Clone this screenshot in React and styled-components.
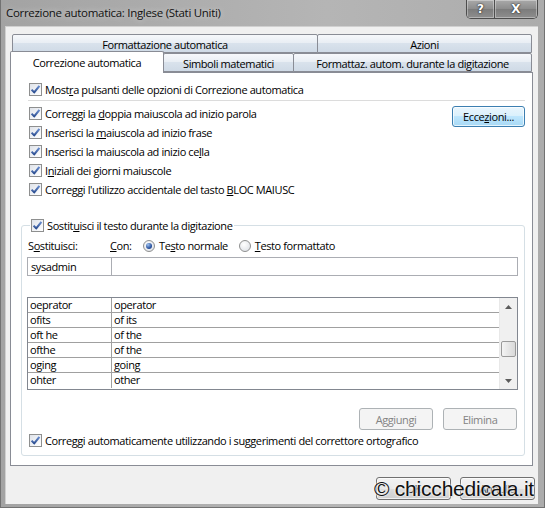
import React from 'react';
import styled, { createGlobalStyle } from 'styled-components';

const GlobalStyle = createGlobalStyle`
    html, body {
        margin: 0;
        padding: 0;
        background: #ffffff;
    }
    body {
        font-family: "Open Sans", "Noto Sans", sans-serif;
        font-size: 11px;
        letter-spacing: -0.4px;
        color: #000;
    }
`

const Window = styled.div`
    position: relative;
    width: 545px;
    height: 508px;
    box-sizing: border-box;
    display: flex;
    flex-direction: column;
    padding: 0 6px 3px 4px;
    background: linear-gradient(90deg, #a3a3a3, #b5b5b5 60%, #acacac);
    border-left: 1px solid #727272;
    border-right: 1px solid #727272;
    border-bottom: 1px solid #727272;
`

const TitleBar = styled.div`
    height: 26px;
    display: flex;
    justify-content: space-between;
    align-items: flex-start;
`

const Title = styled.div`
    padding-top: 5px;
    padding-left: 1px;
    font-size: 11.5px;
    letter-spacing: -0.3px;
    color: #111;
    text-shadow: 0 0 6px rgba(255, 255, 255, 0.6);
`

const Captions = styled.div`
    display: flex;
    height: 18px;
    border: 1px solid #4d4d4d;
    border-top: none;
    border-radius: 0 0 5px 5px;
    overflow: hidden;
`

const CaptionButton = styled.div`
    width: ${p => p.$w}px;
    height: 18px;
    display: flex;
    justify-content: center;
    align-items: center;
    background: linear-gradient(#a9a9a9, #8c8c8c 50%, #7b7b7b 50%, #8e8e8e);
    box-shadow: inset 0 0 0 1px rgba(255, 255, 255, 0.35);
    color: #fff;
    font-family: "DejaVu Sans", sans-serif;
    font-weight: bold;
    font-size: 12px;
    letter-spacing: 0;
    text-shadow: 0 0 2px #222, 0 0 1px #222;
    & + & {
        border-left: 1px solid #4d4d4d;
    }
`

const Client = styled.div`
    flex: 1;
    display: flex;
    flex-direction: column;
    background: #f0f0f0;
    padding: 7px 5px 0 5px;
    box-shadow: inset 1px 1px 0 #d0d0d0;
`

const TabRow = styled.div`
    position: relative;
    display: flex;
    align-items: flex-end;
    height: ${p => p.$h}px;
    margin-left: ${p => p.$indent}px;
    margin-top: ${p => p.$gap}px;
`

const Tab = styled.div`
    position: relative;
    box-sizing: border-box;
    width: ${p => p.$w}px;
    height: ${p => (p.$active ? 22 : 19)}px;
    margin-bottom: ${p => (p.$active ? -1 : 0)}px;
    z-index: ${p => (p.$active ? 2 : 1)};
    display: flex;
    justify-content: center;
    align-items: center;
    padding-top: ${p => (p.$active ? 0 : 1)}px;
    border: 1px solid #898c95;
    border-bottom: ${p => (p.$active ? 'none' : '1px solid #898c95')};
    border-radius: 2px 2px 0 0;
    background: ${p => (p.$active
        ? '#ffffff'
        : 'linear-gradient(#f6f8fb, #e9eef4 45%, #d9e2ec 50%, #cfdae6)')};
    & + & {
        margin-left: -1px;
    }
`

const Panel = styled.div`
    position: relative;
    z-index: 1;
    height: 394px;
    box-sizing: border-box;
    background: #ffffff;
    border: 1px solid #898c95;
    padding: 7px 7px 0 10px;
    display: flex;
    flex-direction: column;
`

const TopSection = styled.div`
    padding-left: 7px;
`

const Separator = styled.div`
    height: 1px;
    background: #dcdcdc;
    margin: 1px 0 3px 0;
`

const OptionsArea = styled.div`
    display: flex;
    justify-content: space-between;
    align-items: flex-start;
`

const OptionList = styled.div`
    display: flex;
    flex-direction: column;
`

const CheckRow = styled.label`
    display: flex;
    align-items: center;
    height: 19px;
    white-space: nowrap;
`

const Box = styled.span`
    width: 13px;
    height: 13px;
    box-sizing: border-box;
    margin: 0 3px 0 1px;
    border: 1px solid #8e8f8f;
    background: linear-gradient(135deg, #dfe3ea, #ffffff);
    display: flex;
    align-items: center;
    justify-content: center;
    flex-shrink: 0;
    svg {
        display: block;
    }
`

const RadioDot = styled.span`
    width: 12px;
    height: 12px;
    box-sizing: border-box;
    border-radius: 50%;
    border: 1px solid #8e8f8f;
    background: radial-gradient(circle at 40% 35%, #ffffff, #d9dde3);
    display: flex;
    align-items: center;
    justify-content: center;
    margin-right: 4px;
    &::after {
        content: '';
        display: ${p => (p.$on ? 'block' : 'none')};
        width: 6px;
        height: 6px;
        border-radius: 50%;
        background: radial-gradient(circle at 35% 30%, #9fc3f0, #2c54a0 60%, #1b3a7a);
    }
`

const Button = styled.div`
    box-sizing: border-box;
    width: ${p => p.$w}px;
    height: ${p => p.$h || 22}px;
    margin-top: ${p => p.$top || 0}px;
    display: flex;
    justify-content: center;
    align-items: center;
    border-radius: 3px;
    border: 1px solid ${p => (p.$disabled ? '#adb2b5' : p.$focus ? '#3c7fb1' : '#707070')};
    color: ${p => (p.$disabled ? '#838383' : '#000')};
    background: ${p => (p.$disabled
        ? '#f4f4f4'
        : p.$focus
            ? 'linear-gradient(#eaf6fd, #d9f0fc 50%, #bee6fd 50%, #a7d9f5)'
            : 'linear-gradient(#f2f2f2, #ebebeb 50%, #dddddd 50%, #cfcfcf)')};
    box-shadow: ${p => (p.$disabled ? 'none' : 'inset 0 0 0 1px rgba(255, 255, 255, 0.7)')};
`

const GroupBox = styled.fieldset`
    margin: 17px 0 0 0;
    padding: 0 6px 5px 5px;
    border: 1px solid #d5dfe5;
    border-radius: 3px;
    display: flex;
    flex-direction: column;
    legend {
        padding: 0 2px 0 0;
        margin-left: 3px;
    }
`

const FieldHeader = styled.div`
    display: flex;
    align-items: center;
    height: 19px;
    margin-top: 1px;
    padding-left: 1px;
`

const Label = styled.span`
    width: ${p => p.$w}px;
`

const RadioItem = styled.label`
    display: flex;
    align-items: center;
    margin-right: ${p => p.$gap || 0}px;
`

const InputRow = styled.div`
    display: flex;
    height: 19px;
    margin-top: 2px;
`

const TextInput = styled.div`
    box-sizing: border-box;
    height: 19px;
    width: ${p => (p.$w ? `${p.$w}px` : 'auto')};
    flex: ${p => (p.$w ? 'none' : 1)};
    border: 1px solid #abadb3;
    border-left-width: ${p => (p.$join ? 0 : 1)}px;
    padding: 0 3px;
    display: flex;
    align-items: center;
`

const List = styled.div`
    display: flex;
    margin-top: 21px;
    height: 93px;
    box-sizing: border-box;
    border: 1px solid #828790;
`

const Rows = styled.div`
    flex: 1;
    display: flex;
    flex-direction: column;
`

const Row = styled.div`
    display: flex;
    height: 15px;
    box-sizing: border-box;
    border-bottom: ${p => (p.$last ? 'none' : '1px solid #a0a0a0')};
`

const Cell = styled.div`
    box-sizing: border-box;
    width: ${p => (p.$w ? `${p.$w}px` : 'auto')};
    flex: ${p => (p.$w ? 'none' : 1)};
    border-right: ${p => (p.$w ? '1px solid #a0a0a0' : 'none')};
    padding-left: 2px;
    line-height: 14px;
    white-space: nowrap;
`

const ScrollBar = styled.div`
    width: 17px;
    display: flex;
    flex-direction: column;
    background: #f0f0f0;
    border-left: 1px solid #e8e8e8;
`

const ScrollArrow = styled.div`
    height: 17px;
    display: flex;
    justify-content: center;
    align-items: center;
`

const ScrollTrack = styled.div`
    flex: 1;
    display: flex;
    flex-direction: column;
    padding-top: ${p => p.$offset}px;
    align-items: center;
`

const Thumb = styled.div`
    width: 15px;
    height: 16px;
    box-sizing: border-box;
    border: 1px solid #9a9a9a;
    border-radius: 2px;
    background: linear-gradient(90deg, #f4f4f4, #e6e6e6 50%, #d9d9d9);
`

const ActionRow = styled.div`
    display: flex;
    justify-content: flex-end;
    gap: 10px;
    margin-top: 18px;
    padding-right: 1px;
`

const BottomCheck = styled(CheckRow)`
    margin-top: 1px;
    padding-left: 1px;
`

const Footer = styled.div`
    display: flex;
    justify-content: flex-end;
    gap: 9px;
    margin-top: 11px;
    margin-right: -2px;
`

const Watermark = styled.div`
    position: absolute;
    right: 10px;
    bottom: 6px;
    font-family: "Liberation Sans", Arial, sans-serif;
    font-size: 21px;
    color: #111;
    letter-spacing: -0.2px;
    text-shadow: 0 0 2px #fff, 0 0 3px #fff, 1px 1px 2px #ccc;
`

// small drawings

const Check = ({ on = true }) => (
    <Box>
        {on && (
            <svg width="11" height="11" viewBox="0 0 11 11">
                <defs>
                    <linearGradient id="ck" x1="0" y1="0" x2="0" y2="1">
                        <stop offset="0" stopColor="#6b8fd0" />
                        <stop offset="1" stopColor="#2d4f92" />
                    </linearGradient>
                </defs>
                <path
                    d="M1.6 5.6 L4.2 8.4 L9.4 1.8"
                    fill="none"
                    stroke="url(#ck)"
                    strokeWidth="2.1"
                    strokeLinejoin="round"
                />
            </svg>
        )}
    </Box>
)

const Arrow = ({ down }) => (
    <svg width="7" height="4" viewBox="0 0 7 4">
        <path d={down ? 'M0 0 L7 0 L3.5 4 Z' : 'M0 4 L7 4 L3.5 0 Z'} fill="#5b5b5b" />
    </svg>
)

const options = [
    <>Correggi la <u>d</u>oppia maiuscola ad inizio parola</>,
    <>Inserisci la <u>m</u>aiuscola ad inizio frase</>,
    <>Inserisci la maiuscola ad inizio ce<u>l</u>la</>,
    <>I<u>n</u>iziali dei giorni maiuscole</>,
    <>Correggi l'utilizzo accidentale del tasto <u>B</u>LOC MAIUSC</>,
]

const entries = [
    ['oeprator', 'operator'],
    ['ofits', 'of its'],
    ['oft he', 'of the'],
    ['ofthe', 'of the'],
    ['oging', 'going'],
    ['ohter', 'other'],
]

export default function App() {
    return (
        <>
            <GlobalStyle />
            <Window>
                <TitleBar>
                    <Title>Correzione automatica: Inglese (Stati Uniti)</Title>
                    <Captions>
                        <CaptionButton $w={27}>?</CaptionButton>
                        <CaptionButton $w={42}>X</CaptionButton>
                    </Captions>
                </TitleBar>

                <Client>
                    <TabRow $h={20} $indent={2} $gap={0}>
                        <Tab $w={306}>Formattazione automatica</Tab>
                        <Tab $w={215}>Azioni</Tab>
                    </TabRow>
                    <TabRow $h={18} $indent={0} $gap={1}>
                        <Tab $w={154} $active>Correzione automatica</Tab>
                        <Tab $w={131}>Simboli matematici</Tab>
                        <Tab $w={239}>Formattaz. autom. durante la digitazione</Tab>
                    </TabRow>

                    <Panel>
                        <TopSection>
                            <CheckRow>
                                <Check />
                                <span>Most<u>r</u>a pulsanti delle opzioni di Correzione automatica</span>
                            </CheckRow>
                            <Separator />
                            <OptionsArea>
                                <OptionList>
                                    {options.map((text, i) => (
                                        <CheckRow key={i}>
                                            <Check />
                                            <span>{text}</span>
                                        </CheckRow>
                                    ))}
                                </OptionList>
                                <Button $w={73} $h={21} $top={2} $focus>
                                    <span>Ecce<u>z</u>ioni...</span>
                                </Button>
                            </OptionsArea>
                        </TopSection>

                        <GroupBox>
                            <legend>
                                <CheckRow>
                                    <Check />
                                    <span>Sostit<u>u</u>isci il testo durante la digitazione</span>
                                </CheckRow>
                            </legend>
                            <FieldHeader>
                                <Label $w={82}>S<u>o</u>stituisci:</Label>
                                <Label $w={33}><u>C</u>on:</Label>
                                <RadioItem $gap={11}>
                                    <RadioDot $on />
                                    <span>Te<u>s</u>to normale</span>
                                </RadioItem>
                                <RadioItem>
                                    <RadioDot />
                                    <span><u>T</u>esto formattato</span>
                                </RadioItem>
                            </FieldHeader>
                            <InputRow>
                                <TextInput $w={85}>sysadmin</TextInput>
                                <TextInput $join />
                            </InputRow>

                            <List>
                                <Rows>
                                    {entries.map(([from, to], i) => (
                                        <Row key={from + i} $last={i === entries.length - 1}>
                                            <Cell $w={84}>{from}</Cell>
                                            <Cell>{to}</Cell>
                                        </Row>
                                    ))}
                                </Rows>
                                <ScrollBar>
                                    <ScrollArrow><Arrow /></ScrollArrow>
                                    <ScrollTrack $offset={26}>
                                        <Thumb />
                                    </ScrollTrack>
                                    <ScrollArrow><Arrow down /></ScrollArrow>
                                </ScrollBar>
                            </List>

                            <ActionRow>
                                <Button $w={74} $disabled>Aggiungi</Button>
                                <Button $w={74} $disabled>Elimina</Button>
                            </ActionRow>

                            <BottomCheck>
                                <Check />
                                <span>Correggi automaticamente utilizzando i suggerimenti del correttore ortografico</span>
                            </BottomCheck>
                        </GroupBox>
                    </Panel>

                    <Footer>
                        <Button $w={75} $h={23}>OK</Button>
                        <Button $w={75} $h={23}>Annulla</Button>
                    </Footer>
                </Client>

                <Watermark>© chicchedicala.it</Watermark>
            </Window>
        </>
    )
}
